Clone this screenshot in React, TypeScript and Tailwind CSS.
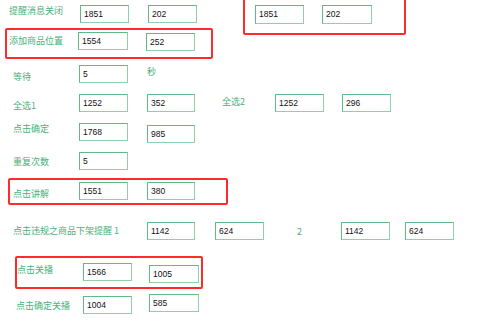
import React from "react";

const Box = ({ v, cls = "" }: { v: string; cls?: string }) => (
  <div
    className={`h-[18px] shrink-0 flex items-center pl-[3px] border border-[#5fba88] border-b-[#8fd0ab] border-r-[#8fd0ab] bg-white text-[8.5px] text-[#111] ${cls}`}
    style={{ fontFamily: '"Liberation Sans", Arial, sans-serif' }}
  >
    {v}
  </div>
);

const Label = ({ t, cls = "" }: { t: string; cls?: string }) => (
  <div
    className={`shrink-0 text-[9px] leading-[12px] text-[#46b27a] whitespace-nowrap ${cls}`}
    style={{ fontFamily: '"Noto Sans CJK SC", "Liberation Sans", sans-serif' }}
  >
    {t}
  </div>
);

const Red = ({ cls }: { cls: string }) => (
  <div className={`absolute border-2 border-[#ff2b2b] rounded-[2px] pointer-events-none ${cls}`} />
);

export default function App() {
  return (
    <div className="relative w-[500px] h-[333px] bg-white overflow-hidden pt-[5px]">
      {/* row 1 */}
      <div className="flex items-start h-[27px]">
        <Label t="提醒消息关闭" cls="ml-[9px] w-[71px] mt-[0px]" />
        <Box v="1851" cls="w-[49px]" />
        <Box v="202" cls="ml-[19px] w-[49px]" />
        <Box v="1851" cls="ml-[58px] w-[49px] h-[19px]" />
        <Box v="202" cls="ml-[18px] w-[50px] h-[19px]" />
      </div>
      {/* row 2 */}
      <div className="flex items-start h-[33px]">
        <Label t="添加商品位置" cls="ml-[9px] w-[69px] mt-[3px]" />
        <Box v="1554" cls="w-[50px]" />
        <Box v="252" cls="ml-[18px] w-[49px] mt-[1px]" />
      </div>
      {/* row 3 */}
      <div className="flex items-start h-[29px]">
        <Label t="等待" cls="ml-[13px] w-[66px] mt-[6px]" />
        <Box v="5" cls="w-[49px] h-[17px]" />
        <Label t="秒" cls="ml-[19px] mt-[1px]" />
      </div>
      {/* row 4 */}
      <div className="flex items-start h-[29px]">
        <Label t="全选1" cls="ml-[13px] w-[66px] mt-[6px]" />
        <Box v="1252" cls="w-[49px] h-[17px]" />
        <Box v="352" cls="ml-[19px] w-[48px] h-[17px]" />
        <Label t="全选2" cls="ml-[27px] w-[53px] mt-[2px]" />
        <Box v="1252" cls="w-[49px] h-[17px]" />
        <Box v="296" cls="ml-[18px] w-[49px] h-[17px]" />
      </div>
      {/* row 5 */}
      <div className="flex items-start h-[29px]">
        <Label t="点击确定" cls="ml-[13px] w-[66px] mt-[0px]" />
        <Box v="1768" cls="w-[49px]" />
        <Box v="985" cls="ml-[19px] w-[48px] mt-[2px]" />
      </div>
      {/* row 6 */}
      <div className="flex items-start h-[30px]">
        <Label t="重复次数" cls="ml-[13px] w-[66px] mt-[4px]" />
        <Box v="5" cls="w-[49px] h-[17px]" />
      </div>
      {/* row 7 */}
      <div className="flex items-start h-[40px]">
        <Label t="点击讲解" cls="ml-[13px] w-[66px] mt-[6px]" />
        <Box v="1551" cls="w-[49px] h-[17px]" />
        <Box v="380" cls="ml-[19px] w-[48px] h-[17px]" />
      </div>
      {/* row 8 */}
      <div className="flex items-start h-[41px]">
        <Label t="点击违规之商品下架提醒 1" cls="ml-[13px] w-[134px] mt-[3px]" />
        <Box v="1142" cls="w-[48px] h-[17px]" />
        <Box v="624" cls="ml-[20px] w-[49px] h-[17px]" />
        <Label t="2" cls="ml-[33px] w-[44px] mt-[4px]" />
        <Box v="1142" cls="w-[49px] h-[17px]" />
        <Box v="624" cls="ml-[15px] w-[49px] h-[17px]" />
      </div>
      {/* row 9 */}
      <div className="flex items-start h-[31px]">
        <Label t="点击关播" cls="ml-[17px] w-[66px] mt-[1px]" />
        <Box v="1566" cls="w-[49px] h-[17px]" />
        <Box v="1005" cls="ml-[17px] w-[50px] mt-[2px] h-[17px]" />
      </div>
      {/* row 10 */}
      <div className="flex items-start h-[39px]">
        <Label t="点击确定关播" cls="ml-[16px] w-[67px] mt-[6px]" />
        <Box v="1004" cls="w-[49px] h-[17px] mt-[2px]" />
        <Box v="585" cls="ml-[17px] w-[50px] h-[17px]" />
      </div>

      <Red cls="left-[243px] top-[-6px] w-[163px] h-[41px]" />
      <Red cls="left-[5px] top-[28px] w-[208px] h-[31px]" />
      <Red cls="left-[8px] top-[178px] w-[220px] h-[27px]" />
      <Red cls="left-[15px] top-[256px] w-[188px] h-[33px]" />
    </div>
  );
}
